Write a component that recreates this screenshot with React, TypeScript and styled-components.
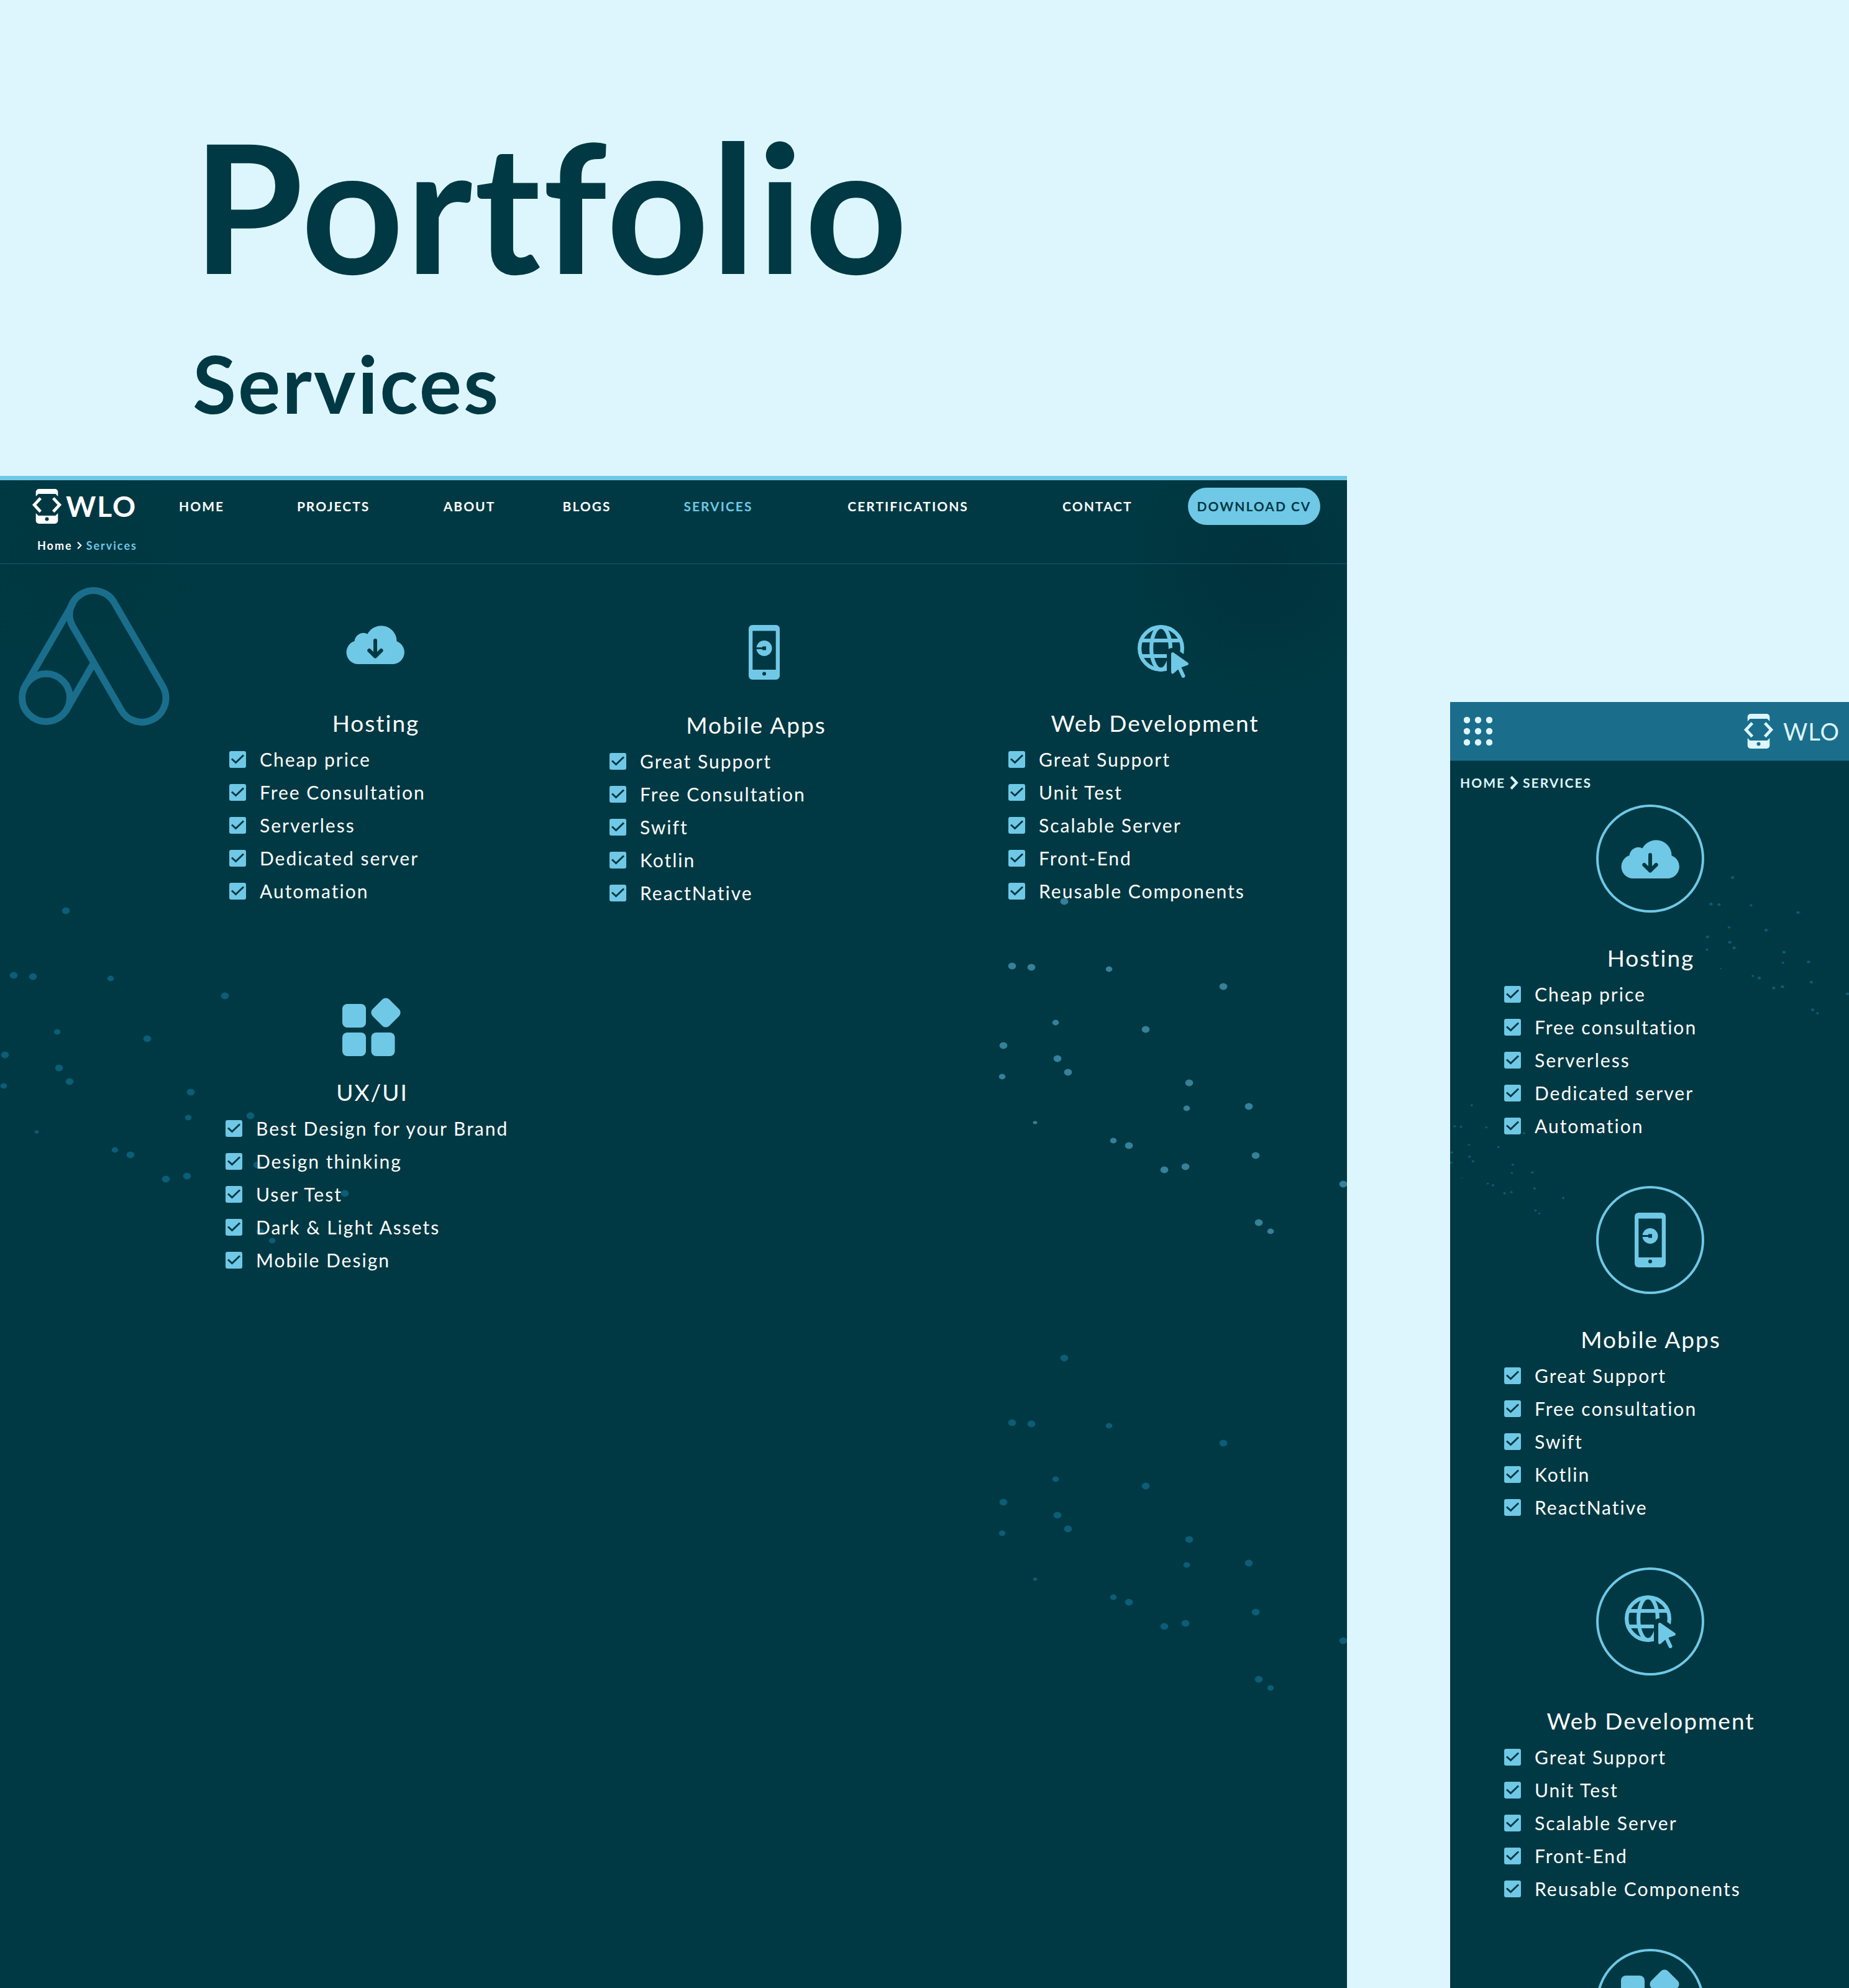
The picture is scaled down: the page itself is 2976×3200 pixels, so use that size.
import React, { useId } from "react";
import styled, { createGlobalStyle } from "styled-components";

const color = {
  ice: "#ddf6fd",
  ink: "#003943",
  sky: "#6fc8e6",
  ocean: "#1a6e8c",
  rule: "#14586a",
  dotBright: "#35809a",
  dotDim: "#0b5d78",
  white: "#ffffff",
};

const GlobalStyle = createGlobalStyle`
  *, *::before, *::after { box-sizing: border-box; }
  body {
    margin: 0;
    background: ${color.ice};
    color: ${color.white};
    font-family: Lato, "Open Sans", sans-serif;
  }
  h1, h2, h3, ul { margin: 0; padding: 0; }
  a { color: inherit; text-decoration: none; }
`;

/* ---------- Page ---------- */

const Page = styled.div`
  display: flex;
  flex-direction: column;
  height: 100vh;
  overflow: hidden;
`;

const Hero = styled.header`
  display: flex;
  flex-direction: column;
  gap: 35px;
  padding: 155px 310px 72px;
  color: ${color.ink};
  letter-spacing: 3px;
`;

const HeroTitle = styled.h1`
  font-size: 288px;
  line-height: 350px;
  font-weight: 700;
`;

const HeroSubtitle = styled.h2`
  font-size: 128px;
  line-height: 154px;
  font-weight: 700;
`;

const Showcase = styled.main`
  display: grid;
  grid-template-columns: minmax(0, 1fr) 642px;
  column-gap: 166px;
  flex: 1;
  min-height: 0;
`;

/* ---------- Desktop frame ---------- */

const DesktopFrame = styled.section`
  position: relative;
  overflow: hidden;
  border-top: 7px solid ${color.sky};
  background:
    radial-gradient(circle at calc(100% - 140px) 136px, rgba(0, 38, 50, 0.35), rgba(0, 38, 50, 0) 220px),
    radial-gradient(circle at 130px 130px, rgba(0, 46, 58, 0.2), rgba(0, 46, 58, 0) 200px),
    ${color.ink};
`;

const DesktopHeader = styled.div`
  position: relative;
  padding-bottom: 18px;
  border-bottom: 1px solid ${color.rule};
`;

const TopBar = styled.div`
  display: flex;
  align-items: center;
  height: 84px;
  padding: 0 43px 0 52px;
`;

const Logo = styled.a<{ $compact?: boolean }>`
  display: flex;
  align-items: center;
  gap: ${(p) => (p.$compact ? 16 : 7)}px;
  flex: 0 0 ${(p) => (p.$compact ? "auto" : "236px")};
  font-size: ${(p) => (p.$compact ? 38 : 46)}px;
  line-height: 56px;
  font-weight: ${(p) => (p.$compact ? 400 : 700)};
  letter-spacing: ${(p) => (p.$compact ? 1 : 2)}px;
  color: ${(p) => (p.$compact ? color.ice : color.white)};
`;

const Nav = styled.nav`
  display: grid;
  grid-template-columns: 190fr 236fr 192fr 195fr 264fr 346fr 202fr;
  flex: 1;
`;

const NavLink = styled.a<{ $active?: boolean }>`
  font-size: 21px;
  line-height: 26px;
  font-weight: 700;
  letter-spacing: 2px;
  color: ${(p) => (p.$active ? color.sky : color.white)};
`;

const DownloadButton = styled.button`
  width: 213px;
  height: 60px;
  padding: 0;
  border: 0;
  border-radius: 30px;
  background: ${color.sky};
  color: ${color.ink};
  font: 700 21px/26px Lato, "Open Sans", sans-serif;
  letter-spacing: 2px;
  white-space: nowrap;
`;

const Breadcrumb = styled.nav`
  display: flex;
  align-items: center;
  gap: 7px;
  margin: 10px 60px 0;
  font-size: 18px;
  line-height: 22px;
  font-weight: 700;
  letter-spacing: 2px;
`;

const Crumb = styled.a<{ $current?: boolean }>`
  color: ${(p) => (p.$current ? color.sky : "inherit")};
`;

const AdsMark = styled.svg`
  position: absolute;
  top: 173px;
  left: 30px;
  width: 242px;
  height: 221px;
  overflow: visible;
  fill: none;
  stroke: ${color.ocean};
  stroke-width: 11;
`;

const ServiceBoard = styled.div`
  position: relative;
  display: flex;
  flex-direction: column;
  gap: 142px;
  padding-top: 98px;
`;

const ServiceRow = styled.div<{ $inset: number }>`
  display: grid;
  grid-template-columns: 612px 642px 470px;
  padding-left: ${(p) => p.$inset}px;
`;

/* ---------- Mobile frame ---------- */

const MobileFrame = styled.section`
  position: relative;
  overflow: hidden;
  margin-top: 364px;
  background: ${color.ink};
`;

const MobileHeader = styled.div`
  position: relative;
  display: flex;
  align-items: center;
  justify-content: space-between;
  height: 95px;
  padding: 0 15px 0 22px;
  border-bottom: 1px solid #0f5068;
  background: ${color.ocean};
`;

const MenuButton = styled.button`
  display: block;
  padding: 0;
  border: 0;
  background: none;
  line-height: 0;
`;

const MobileBreadcrumb = styled(Breadcrumb)`
  position: relative;
  height: 70px;
  margin: 0 16px;
  font-size: 21px;
  line-height: 26px;
  color: ${color.ice};
`;

const MobileStack = styled.div`
  position: relative;
  display: flex;
  flex-direction: column;
  align-items: center;
  gap: 70px;
  padding-left: 2px;
`;

/* ---------- Service card ---------- */

const Card = styled.article`
  display: flex;
  flex-direction: column;
  width: 470px;
`;

const IconSlot = styled.div<{ $height: number; $lead: number }>`
  display: flex;
  justify-content: center;
  align-items: flex-start;
  height: ${(p) => p.$height}px;
  margin-bottom: 34px;
  padding-left: ${(p) => p.$lead}px;
`;

const Badge = styled.div`
  display: grid;
  place-items: center;
  flex: none;
  align-self: center;
  width: 174px;
  height: 174px;
  margin-bottom: 49px;
  border: 4px solid ${color.sky};
  border-radius: 50%;
`;

const CardTitle = styled.h3`
  margin-bottom: 8px;
  padding-left: 2px;
  font-size: 37px;
  line-height: 48px;
  font-weight: 400;
  letter-spacing: 2px;
  text-align: center;
`;

const FeatureList = styled.ul`
  list-style: none;
`;

const FeatureLabel = styled.label`
  display: flex;
  align-items: center;
  gap: 22px;
  font-size: 30px;
  line-height: 53px;
  letter-spacing: 2px;
  white-space: nowrap;
`;

const TickBox = styled.span`
  display: grid;
  flex: none;

  & > * {
    grid-area: 1 / 1;
  }
`;

const TickInput = styled.input`
  appearance: none;
  width: 27px;
  height: 27px;
  margin: 0;
  border-radius: 3px;
  background: ${color.sky};
`;

const TickMark = styled.svg`
  width: 27px;
  height: 27px;
  fill: none;
  stroke: ${color.ink};
  stroke-width: 3;
  pointer-events: none;
`;

/* ---------- Decoration ---------- */

const DotCanvas = styled.svg<{ $top: number; $width: number; $side: "left" | "right"; $tone: string }>`
  position: absolute;
  top: ${(p) => p.$top}px;
  ${(p) => p.$side}: 0;
  width: ${(p) => p.$width}px;
  fill: ${(p) => p.$tone};
  pointer-events: none;
`;

const dots: [number, number, number][] = [
  [106, 6, 6], [22, 110, 6], [53, 112, 6], [178, 115, 5], [362, 143, 6], [92, 201, 5],
  [237, 212, 6], [8, 238, 6], [95, 259, 6], [112, 281, 6], [6, 288, 5], [307, 298, 6],
  [303, 339, 5], [403, 336, 6], [59, 362, 3], [185, 391, 5], [210, 399, 6], [267, 438, 6],
  [301, 433, 6], [414, 415, 6], [555, 461, 6], [419, 523, 6], [438, 537, 5],
];

function DotField(props: { top: number; width: number; side: "left" | "right"; tone: string }) {
  return (
    <DotCanvas
      viewBox="0 0 561 544"
      aria-hidden="true"
      $top={props.top}
      $width={props.width}
      $side={props.side}
      $tone={props.tone}
    >
      {dots.map(([x, y, r]) => (
        <ellipse key={`${x}-${y}`} cx={x} cy={y} rx={r + 0.4} ry={r - 0.6} />
      ))}
    </DotCanvas>
  );
}

/* ---------- Icons ---------- */

function PhoneCodeIcon() {
  return (
    <svg width="47" height="56" viewBox="0 0 47 56" fill="currentColor" aria-hidden="true">
      <path d="M5.700 12V5a5 5 0 0 1 5-5h25.600a5 5 0 0 1 5 5v7l-4-4H9.700z" />
      <path
        fillRule="evenodd"
        d="M5.700 39l4 4h27.600l4-4v12a5 5 0 0 1-5 5H10.700a5 5 0 0 1-5-5zM23.500 45.500a3 3 0 1 0 0 6a3 3 0 1 0 0-6z"
      />
      <path
        d="M13.300 14.800L3.200 25.700L13.300 36.600M33.700 14.800L43.800 25.700L33.700 36.600"
        fill="none"
        stroke="currentColor"
        strokeWidth="4.800"
      />
    </svg>
  );
}

function CloudIcon() {
  return (
    <svg width="94" height="63" viewBox="0 0 94 63" aria-hidden="true">
      <path
        fill={color.sky}
        d="M19 63A19 19 0 0 1 13.500 26A14.500 14.500 0 0 1 34.500 14.400A25 25 0 0 1 81.500 26.200A19 19 0 0 1 75 63Z"
      />
      <path
        d="M47 25V49M37.300 41L47 50.500L56.700 41"
        fill="none"
        stroke={color.ink}
        strokeWidth="6"
        strokeLinecap="round"
        strokeLinejoin="round"
      />
    </svg>
  );
}

function PhoneIcon() {
  return (
    <svg width="50" height="88" viewBox="0 0 50 88" fill={color.sky} aria-hidden="true">
      <path
        fillRule="evenodd"
        d="M6 0H44A6 6 0 0 1 50 6V82A6 6 0 0 1 44 88H6A6 6 0 0 1 0 82V6A6 6 0 0 1 6 0ZM6.300 9.500V72H43.700V9.500ZM25 75.500a3 3 0 1 0 0 6a3 3 0 1 0 0-6z"
      />
      <circle cx="25" cy="37.500" r="12.500" />
      <path fill={color.ink} d="M12 36H22V34.500H28V40.500H22V39H12Z" />
    </svg>
  );
}

function GlobeIcon() {
  const maskId = useId();
  return (
    <svg width="82" height="85" viewBox="0 0 82 85" aria-hidden="true">
      <mask id={maskId} maskUnits="userSpaceOnUse" x="0" y="0" width="82" height="85">
        <rect width="82" height="85" fill="white" />
        <path d="M47 90V46Q47 37 56 37L62 38L76 48.500L90 58V90Z" fill="black" />
      </mask>
      <g mask={`url(#${maskId})`} fill="none" stroke={color.sky} strokeWidth="6.200">
        <circle cx="37.500" cy="37.500" r="34.400" />
        <ellipse cx="37.500" cy="37.500" rx="15.400" ry="34.400" />
        <path d="M5 25H70M5 50H70" />
      </g>
      <path
        d="M56.500 46.500L79.300 62.500L66.500 67L56.500 76Z"
        fill={color.sky}
        stroke={color.sky}
        strokeWidth="5"
        strokeLinejoin="round"
      />
      <path d="M66 66L73.500 82" stroke={color.sky} strokeWidth="6" strokeLinecap="round" />
    </svg>
  );
}

function AppsIcon() {
  return (
    <svg width="94" height="108" viewBox="0 0 94 108" fill={color.sky} aria-hidden="true">
      <rect y="10" width="38" height="38" rx="8" />
      <rect y="56" width="38" height="38" rx="8" />
      <rect x="46.500" y="56" width="38" height="38" rx="8" />
      <rect x="51" y="5" width="38" height="38" rx="8" transform="rotate(45 70 24)" />
    </svg>
  );
}

function Chevron({ large }: { large?: boolean }) {
  return large ? (
    <svg width="14" height="22" viewBox="0 0 14 22" fill="none" aria-hidden="true">
      <path d="M2 1.500L11 11L2 20.500" stroke="currentColor" strokeWidth="4" />
    </svg>
  ) : (
    <svg width="8" height="12" viewBox="0 0 8 12" fill="none" aria-hidden="true">
      <path d="M1 0.800L6.300 6L1 11.200" stroke="currentColor" strokeWidth="2.200" />
    </svg>
  );
}

function GridDotsIcon() {
  return (
    <svg width="46" height="46" viewBox="0 0 46 46" fill={color.ice} aria-hidden="true">
      {[5, 23, 41].map((y) => [5, 23, 41].map((x) => <circle key={`${x}-${y}`} cx={x} cy={y} r="5.200" />))}
    </svg>
  );
}

/* ---------- Content ---------- */

type Service = {
  title: string;
  icon: React.ReactNode;
  slot: number;
  lead: number;
  features: string[];
};

const hosting: Service = {
  title: "Hosting",
  icon: <CloudIcon />,
  slot: 100,
  lead: 0,
  features: ["Cheap price", "Free Consultation", "Serverless", "Dedicated server", "Automation"],
};

const mobileApps: Service = {
  title: "Mobile Apps",
  icon: <PhoneIcon />,
  slot: 103,
  lead: 28,
  features: ["Great Support", "Free Consultation", "Swift", "Kotlin", "ReactNative"],
};

const webDevelopment: Service = {
  title: "Web Development",
  icon: <GlobeIcon />,
  slot: 100,
  lead: 28,
  features: ["Great Support", "Unit Test", "Scalable Server", "Front-End", "Reusable Components"],
};

const uxUi: Service = {
  title: "UX/UI",
  icon: <AppsIcon />,
  slot: 94,
  lead: 0,
  features: ["Best Design for your Brand", "Design thinking", "User Test", "Dark & Light Assets", "Mobile Design"],
};

const navItems = ["HOME", "PROJECTS", "ABOUT", "BLOGS", "SERVICES", "CERTIFICATIONS", "CONTACT"];

function Features({ items }: { items: string[] }) {
  return (
    <FeatureList>
      {items.map((item) => (
        <li key={item}>
          <FeatureLabel>
            <TickBox>
              <TickInput type="checkbox" checked readOnly />
              <TickMark viewBox="0 0 27 27" aria-hidden="true">
                <path d="M4 12.500L10.500 18.500L23 6.500" />
              </TickMark>
            </TickBox>
            {item}
          </FeatureLabel>
        </li>
      ))}
    </FeatureList>
  );
}

function DesktopCard({ service }: { service: Service }) {
  return (
    <Card>
      <IconSlot $height={service.slot} $lead={service.lead}>
        {service.icon}
      </IconSlot>
      <CardTitle>{service.title}</CardTitle>
      <Features items={service.features} />
    </Card>
  );
}

function MobileCard({ service }: { service: Service }) {
  return (
    <Card>
      <Badge>{service.icon}</Badge>
      <CardTitle>{service.title}</CardTitle>
      <Features items={service.features.map((f) => f.replace("Consultation", "consultation"))} />
    </Card>
  );
}

export default function App() {
  return (
    <Page>
      <GlobalStyle />
      <Hero>
        <HeroTitle>Portfolio</HeroTitle>
        <HeroSubtitle>Services</HeroSubtitle>
      </Hero>
      <Showcase>
        <DesktopFrame>
          <DotField top={687} width={561} side="left" tone={color.dotDim} />
          <DotField top={672} width={561} side="right" tone={color.dotBright} />
          <DotField top={1407} width={561} side="right" tone={color.dotDim} />
          <DesktopHeader>
            <TopBar>
              <Logo href="#home">
                <PhoneCodeIcon />
                WLO
              </Logo>
              <Nav>
                {navItems.map((item) => (
                  <NavLink key={item} href={`#${item.toLowerCase()}`} $active={item === "SERVICES"}>
                    {item}
                  </NavLink>
                ))}
              </Nav>
              <DownloadButton type="button">DOWNLOAD CV</DownloadButton>
            </TopBar>
            <Breadcrumb>
              <Crumb href="#home">Home</Crumb>
              <Chevron />
              <Crumb href="#services" $current>
                Services
              </Crumb>
            </Breadcrumb>
          </DesktopHeader>
          <AdsMark viewBox="30 946 242 221" aria-hidden="true">
            <circle cx="74" cy="1123" r="38.500" />
            <path d="M117.700 1009.300A38.500 38.500 0 1 1 184.300 970.700L261.300 1103.700A38.500 38.500 0 1 1 194.700 1142.300Z" />
            <path d="M40.700 1103.700L117.700 970.700M107.300 1142.300L151 1066.800" />
          </AdsMark>
          <ServiceBoard>
            <ServiceRow $inset={369}>
              <DesktopCard service={hosting} />
              <DesktopCard service={mobileApps} />
              <DesktopCard service={webDevelopment} />
            </ServiceRow>
            <ServiceRow $inset={363}>
              <DesktopCard service={uxUi} />
            </ServiceRow>
          </ServiceBoard>
        </DesktopFrame>
        <MobileFrame>
          <DotField top={280} width={231} side="right" tone={color.dotDim} />
          <DotField top={647} width={184} side="left" tone={color.dotDim} />
          <MobileHeader>
            <MenuButton type="button" aria-label="Menu">
              <GridDotsIcon />
            </MenuButton>
            <Logo href="#home" $compact>
              <PhoneCodeIcon />
              WLO
            </Logo>
          </MobileHeader>
          <MobileBreadcrumb>
            <Crumb href="#home">HOME</Crumb>
            <Chevron large />
            <Crumb href="#services">SERVICES</Crumb>
          </MobileBreadcrumb>
          <MobileStack>
            <MobileCard service={hosting} />
            <MobileCard service={mobileApps} />
            <MobileCard service={webDevelopment} />
            <Badge>{uxUi.icon}</Badge>
          </MobileStack>
        </MobileFrame>
      </Showcase>
    </Page>
  );
}
